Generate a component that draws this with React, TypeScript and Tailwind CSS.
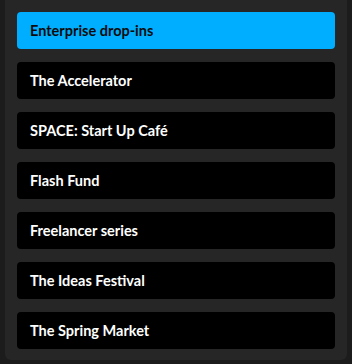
import React from 'react';

const items = [
  'Enterprise drop-ins',
  'The Accelerator',
  'SPACE: Start Up Café',
  'Flash Fund',
  'Freelancer series',
  'The Ideas Festival',
  'The Spring Market',
];

export default function App() {
  return (
    <div className="w-[352px] h-[364px] bg-[#1c1c1c] px-[5px] overflow-hidden" style={{ fontFamily: 'Lato, "Noto Sans", sans-serif' }}>
      <div className="bg-[#262626] rounded-b-md h-[360px] px-3 pt-3 flex flex-col gap-[13px]">
        {items.map((item, i) => (
          <button
            key={item}
            className={
              i === 0
                ? 'h-[37px] rounded bg-[#00aeff] text-[#0b0b0b] text-left px-[13px] text-[14.5px] font-bold'
                : 'h-[37px] rounded bg-black text-white text-left px-[13px] text-[14.5px] font-bold'
            }
          >
            {item}
          </button>
        ))}
      </div>
    </div>
  );
}
